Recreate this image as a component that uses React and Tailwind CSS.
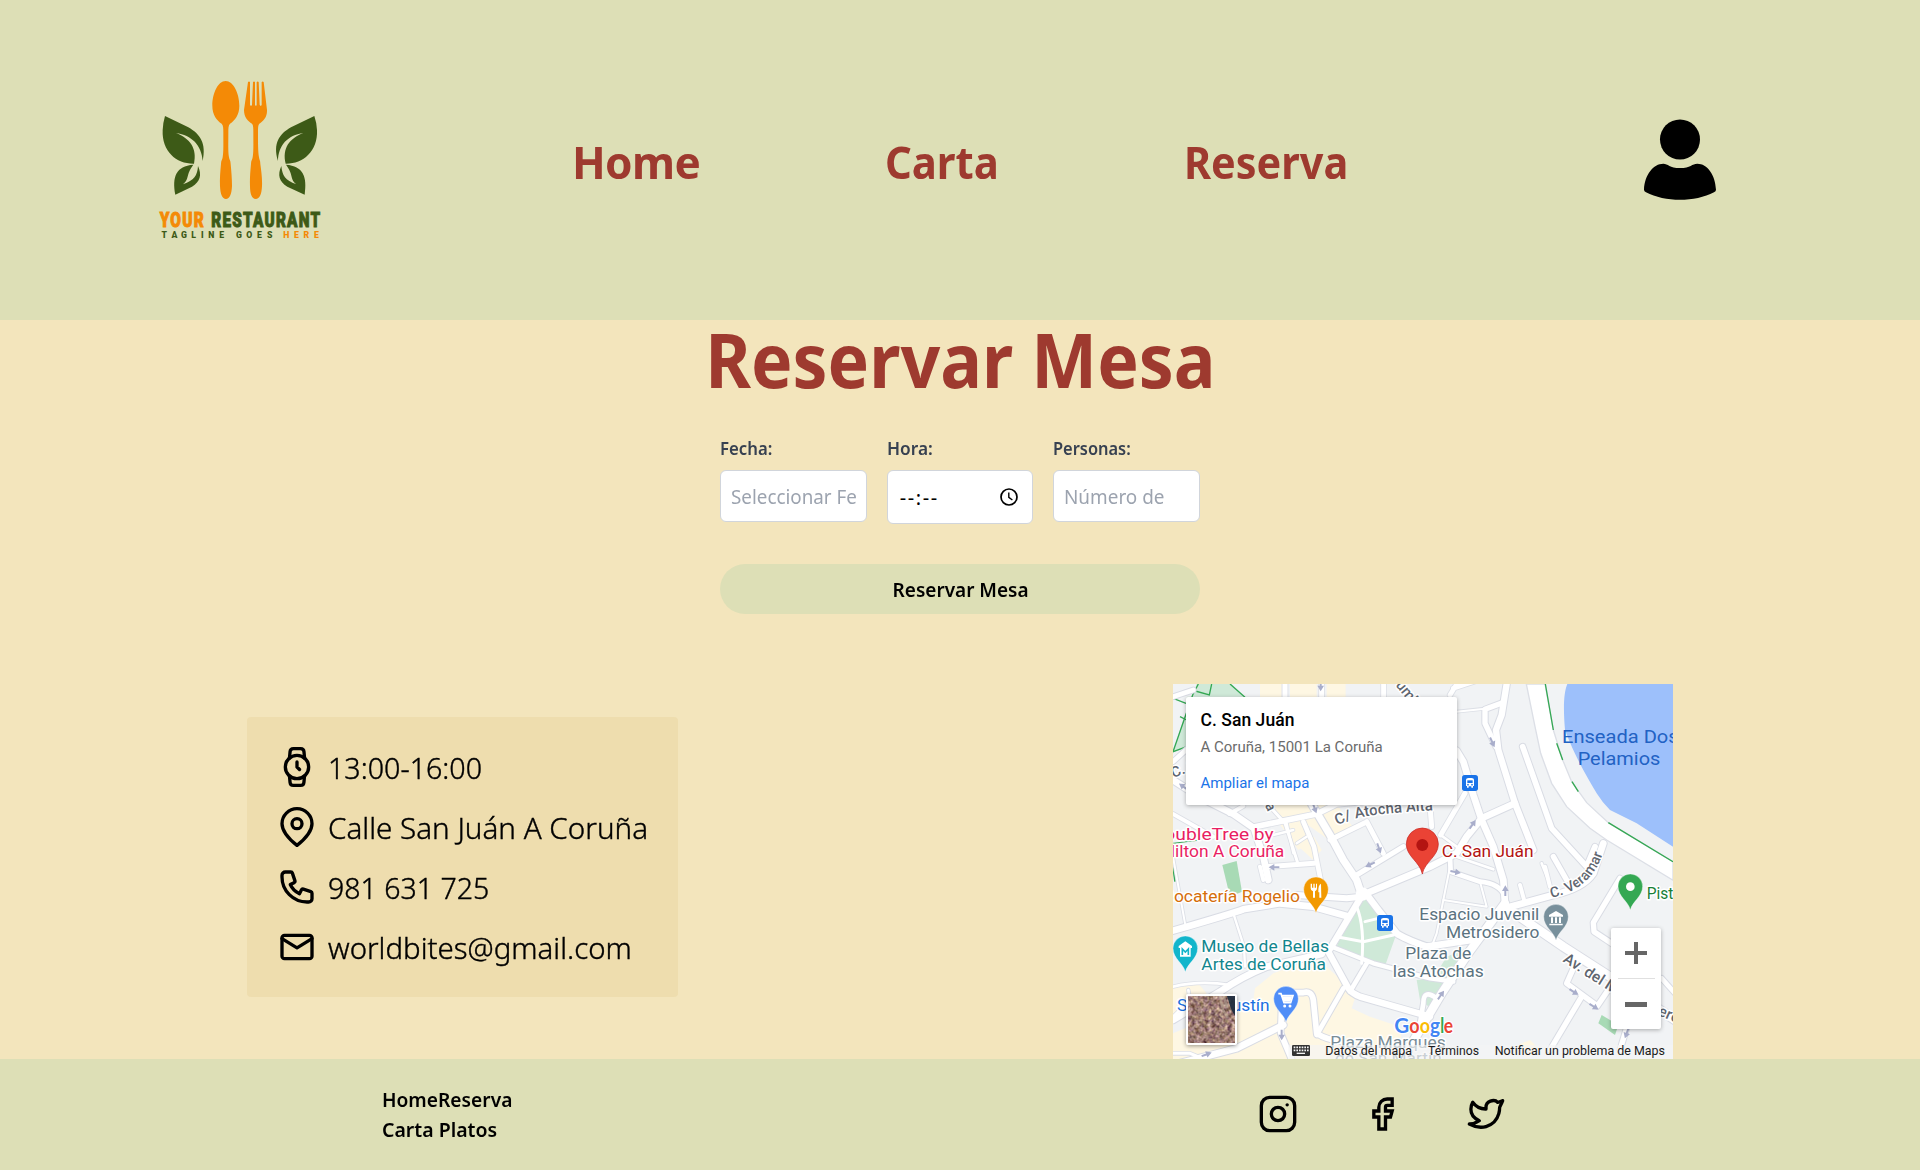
import React from "react";

function Logo() {
  return (
    <svg className="h-[200px] w-[200px] shrink-0" viewBox="0 0 600 600">
      <g fill="#f48a06">
        <path d="M257 63C234 63 217 100 217 137C217 164 230 181 245 191C250 196 250 205 250 216C250 250 251 275 248 292C247 300 243 302 243 312C241 335 239 355 240 378C241 402 247 417 258 417C269 417 275 402 276 378C276 355 274 335 272 312C272 302 268 300 267 292C264 275 265 250 265 216C265 205 265 196 270 191C285 181 298 164 298 137C298 100 280 63 257 63Z" />
        <path d="M324 66Q327 63 330 66V134Q333 141 336 134L339 66Q342 63 345 66V134Q348 141 350 134V66Q353 63 356 66L359 134Q362 141 365 134V66Q368 63 371 66L381 150C382 172 370 184 358 191C354 195 354 205 354 216C354 250 354 275 357 292C358 300 361 302 361 312C364 335 367 355 366 378C365 402 359 417 347 417C336 417 330 402 330 378C329 355 331 335 333 312C333 302 337 300 338 292C341 275 340 250 340 216C340 205 340 195 336 191C324 184 312 172 312 150Z" />
      </g>
      <g fill="#3d5a17">
        <path d="M75 168L145 202C180 222 200 250 188 303C185 255 155 226 108 219C150 235 172 265 162 311C110 312 65 275 68 210Q69 188 75 168ZM160 314C136 346 150 355 129 373C163 360 172 347 174 318C186 345 181 365 156 380L106 404C96 350 108 318 160 314Z" />
        <path d="M523 168L453 202C418 222 398 250 414 303C415 255 443 226 490 219C448 235 426 265 437 311C488 312 534 275 531 210Q530 188 523 168ZM438 314C462 346 448 355 469 373C435 360 427 347 424 318C412 345 417 365 442 380L494 404C502 350 490 318 438 314Z" />
      </g>
      <g fontFamily="Roboto, Inter, sans-serif" fontWeight="900">
        <text x="59" y="500" fontSize="61" letterSpacing="5" textLength="136" lengthAdjust="spacingAndGlyphs" fill="#f48a06" stroke="#f48a06" strokeWidth="3">YOUR</text>
        <text x="214" y="500" fontSize="61" letterSpacing="5" textLength="330" lengthAdjust="spacingAndGlyphs" fill="#3d5a17" stroke="#3d5a17" strokeWidth="3">RESTAURANT</text>
        <g fontSize="26" textAnchor="middle">
          <text y="535" x="73 103 132 161 187 214 245" fill="#3d5a17">TAGLINE</text>
          <text y="535" x="297 328 358 389" fill="#3d5a17">GOES</text>
          <text y="535" x="439 469 499 529" fill="#f48a06">HERE</text>
        </g>
      </g>
    </svg>
  );
}

const tile = "h-10 w-10 shrink-0";
function Line({ children }) {
  return (
    <svg className={tile} viewBox="0 0 24 24" fill="none" stroke="black" strokeWidth="2" strokeLinecap="round" strokeLinejoin="round">
      {children}
    </svg>
  );
}

/* Roads are [path, width]; the drawing's unit is a third of a pixel. */
const minor = [
  ["M345 12V55M455 12V55M641 12V55", 15],
  ["M295 375L345 430L382 545", 9],
  ["M350 430L370 520M380 490L410 470M310 465L370 450", 7],
  ["M400 425L432 500L452 600", 14],
  ["M290 560L432 550M480 480L585 428M590 425L640 520M780 380L785 440M885 340L812 465", 15],
  ["M220 378L178 402M9 402L130 470", 12],
  ["M255 440L440 402L500 372L620 360", 17],
  ["M860 95L945 86", 6],
  ["M812 465L860 500M860 530L970 568", 8],
  ["M840 560L828 620L800 760L785 800", 6],
  ["M860 12L840 45M850 25L940 -5", 14],
  ["M820 660L950 680L930 605M9 530L45 730", 6],
  ["M190 700L222 800L225 860", 7],
  ["M270 560L280 600M1050 615L1065 670M1125 560L1140 620", 12],
  ["M1115 550L1135 600", 8],
  ["M9 920Q90 900 180 915", 8],
  ["M9 1010L60 960L55 930", 8],
  ["M9 1120L60 1120L100 1137", 9],
];
const major = [
  ["M9 300L90 352L190 402L252 445L280 530L295 600", 20],
  ["M9 245L70 190M-5 55L70 30", 14],
  ["M9 752Q190 700 220 688L330 670L430 680L530 708", 20],
  ["M380 645L530 655L575 650", 18],
  ["M9 1020L150 935Q215 890 290 860L455 822", 20],
  ["M425 372L480 465L520 540L560 600L575 645", 22],
  ["M577 645L780 560L860 520L890 470L935 415L1035 370", 20],
  ["M560 585L700 500", 15],
  ["M577 645L475 815L535 925Q545 940 570 950L780 1010", 19],
  ["M485 800L610 850L780 895L850 905", 13],
  ["M595 650L625 690L680 760Q700 775 770 800L905 780", 20],
  ["M590 850L540 935M520 925L440 1065", 14],
  ["M9 1155L200 1105L340 1035", 20],
  ["M335 970L332 1060L370 1150", 17],
  ["M350 938H400Q425 930 430 960L440 1060Q470 1080 520 1085L600 1130", 17],
  ["M860 212L880 245L910 345L935 420L970 500L1000 600L1005 670", 20],
  ["M1010 12L995 105L978 150L985 210L1035 370L1090 510", 19],
  ["M998 68L945 88L945 130L978 200", 16],
  ["M1058 200L1145 445L1250 560L1275 500", 17],
  ["M1150 530L1190 600", 16],
  ["M840 530L842 575L930 605Q990 610 1005 650", 14],
  ["M1015 682L1150 645Q1240 625 1270 580L1300 490", 20],
  ["M1005 670L900 812L815 940L690 1150", 25],
  ["M800 955Q760 925 760 970L750 1030", 14],
  ["M1005 680L1180 800L1320 890L1530 1030", 26],
  ["M1210 865L1190 910L1282 978L1318 925M1232 955L1140 1110", 16],
  ["M1350 595L1270 728L1272 755L1340 800M1380 1010L1350 1110", 16],
  ["M1475 895L1520 945", 14],
];

const label = { paintOrder: "stroke", stroke: "#fff", strokeWidth: 9, strokeLinejoin: "round" };
function T({ x, y, w, s = 52, c = "#5b7380", children, ...rest }) {
  return (
    <text x={x} y={y} fontSize={s} fill={c} textLength={w} lengthAdjust="spacingAndGlyphs" {...label} {...rest}>
      {children}
    </text>
  );
}
function CurvedName({ id, d, size, children }) {
  return (
    <>
      <path id={id} d={d} fill="none" />
      <text fontSize={size} fill="#5f6670" {...label}><textPath href={"#" + id}>{children}</textPath></text>
    </>
  );
}
function Pin({ x, y, c, children }) {
  return (
    <g transform={`translate(${x} ${y})`}>
      <path d="M0 54C-6 28-37 14-37-17A37 37 0 0 1 37-17C37 14 6 28 0 54Z" fill={c} stroke="#fff" strokeOpacity=".6" strokeWidth="2" />
      {children}
    </g>
  );
}
function Bus({ x, y }) {
  return (
    <g transform={`translate(${x} ${y})`}>
      <rect width="48" height="48" rx="8" fill="#1a73e8" />
      <path d="M12 16Q12 9 20 9H28Q36 9 36 16V33H33V38H28V34H20V38H15V33H12Z" fill="#fff" />
      <path d="M16 16H32V24H16Z" fill="#1a73e8" />
      <circle cx="18" cy="29" r="2.5" fill="#1a73e8" />
      <circle cx="30" cy="29" r="2.5" fill="#1a73e8" />
    </g>
  );
}
function Arrow({ x, y, r }) {
  return (
    <path transform={`translate(${x} ${y}) rotate(${r})`} d="M-16-3H-1V-10L16 0L-1 10V3H-16Z" fill="#a9aecb" />
  );
}

function MapView() {
  return (
    <div className="relative h-[375px] w-[500px] overflow-hidden bg-[#f1f3f5]">
      <svg className="block h-full w-full" viewBox="9 12 1500 1125" fontFamily="Roboto, sans-serif">
        <g fill="#fef7e3">
          <path d="M270 12H335V55H270ZM360 12H440V55H360ZM470 12H527V55H470ZM315 375L500 372L548 440L470 475L400 425L430 480L385 510L320 420Z" />
          <path d="M370 485L432 470L455 510L430 540Z" />
          <path d="M255 925L310 880L440 835L560 940L545 985L600 1010L690 1040L700 1137H9V1060L250 960Z" />
          <path d="M9 920L80 905L110 940L9 1010Z" />
          <path d="M1050 1092L1080 1080L1110 1110L1070 1137Z" />
        </g>
        <path d="M80 12H185L222 50H50V205L9 215L40 120Z" fill="#cfe9d8" />
        <path d="M85 12L68 45L9 215L50 200M9 55L48 70M65 30L118 45L125 12M180 12L225 52M30 110L50 120" fill="none" stroke="#34a853" strokeWidth="4" />
        <path d="M9 490L90 480" stroke="#34a853" strokeWidth="3" />
        <path d="M9 560L15 605" stroke="#34a853" strokeWidth="5" />
        <path d="M157 555L200 543L216 635L180 650Z" fill="#a8dab5" />
        <path d="M540 690L590 655L620 700L680 760L645 858L500 800Z" fill="#cfe9d8" />
        <path d="M740 900L790 895L830 830L900 800L870 880L790 990L750 960Z" fill="#cfe9d8" />
        <path d="M1295 1005L1345 1035L1335 1065L1285 1030Z" fill="#a8dab5" />
        <path d="M1192 12C1180 40 1180 90 1185 150C1215 230 1245 280 1280 340Q1295 365 1320 390L1400 430L1509 500V12Z" fill="#9dc0fb" />
        <g fill="none" strokeLinecap="round" strokeLinejoin="round">
          {minor.map(([d, w]) => <path key={d} d={d} stroke="#dcdfe6" strokeWidth={w + 5} />)}
          {major.map(([d, w]) => <path key={d} d={d} stroke="#d9dce4" strokeWidth={w + 6} />)}
          {minor.map(([d, w]) => <path key={d} d={d} stroke="#fff" strokeWidth={w} />)}
          {major.map(([d, w]) => <path key={d} d={d} stroke="#fff" strokeWidth={w} />)}
          <path d="M560 680Q585 740 575 850M500 770L580 785L670 765M585 725L625 715" stroke="#fff" strokeWidth="9" />
        </g>
        <path d="M1069 12L1095 140L1112 220L1145 310L1190 380L1260 445L1310 480L1509 601V545L1315 428L1250 368L1205 305L1178 240L1150 150L1125 12Z" fill="#fff" stroke="#dcdfe6" strokeWidth="4" />
        <path d="M1126 12L1150 150M1160 190L1178 240M1206 305L1225 335M1315 428L1509 545" stroke="#34a853" strokeWidth="4" fill="none" />
        <circle cx="577" cy="642" r="20" fill="#fff" />

        <Arrow x={452} y={18} r={90} />
        <Arrow x={40} y={320} r={215} />
        <Arrow x={434} y={385} r={70} />
        <Arrow x={627} y={505} r={70} />
        <Arrow x={312} y={562} r={180} />
        <Arrow x={600} y={554} r={155} />
        <Arrow x={967} y={187} r={65} />
        <Arrow x={908} y={433} r={-55} />
        <Arrow x={857} y={576} r={10} />
        <Arrow x={1006} y={632} r={-90} />
        <Arrow x={813} y={945} r={-55} />
        <Arrow x={1212} y={936} r={32} />
        <Arrow x={1272} y={980} r={32} />
        <Arrow x={1370} y={1060} r={110} />
        <Arrow x={335} y={1065} r={90} />
        <Arrow x={110} y={1123} r={-20} />

        <T x={1176} y={190} w={350} s={57} c="#2262c4" strokeWidth={0}>Enseada Dos</T>
        <T x={1223} y={256} w={248} s={57} c="#2262c4" strokeWidth={0}>Pelamios</T>
        <g fontWeight="500">
          <CurvedName id="street-humboldt" d="M676 16L790 155" size={44}>umboldt</CurvedName>
          <CurvedName id="street-west" d="M10 294L90 262" size={44}>C. San</CurvedName>
          <CurvedName id="street-florencia" d="M250 305L310 430" size={42}>encia</CurvedName>
          <CurvedName id="street-atocha" d="M502 436C560 404 660 399 800 390" size={45}>C/ Atocha Alta</CurvedName>
          <CurvedName id="street-veramar" d="M1144 654C1225 635 1290 590 1308 480" size={43}>C. Veramar</CurvedName>
          <CurvedName id="street-metrosidero" d="M1177 844L1400 985" size={46}>Av. del Met</CurvedName>
          <CurvedName id="street-east" d="M1462 1004L1540 1038" size={46}>ero</CurvedName>
        </g>
        <T x={-17} y={480} w={328} c="#e91e63">oubleTree by</T>
        <T x={-22} y={532} w={365} c="#e91e63">Hilton A Coruña</T>
        <T x={-21} y={665} w={411} c="#d56e0c">Bocatería Rogelio</T>
        <T x={94} y={817} w={383} c="#12868e">Museo de Bellas</T>
        <T x={94} y={869} w={374} c="#12868e">Artes de Coruña</T>
        <T x={815} y={531} w={276} c="#b31412">C. San Juán</T>
        <T x={748} y={721} w={360}>Espacio Juvenil</T>
        <T x={828} y={773} w={280}>Metrosidero</T>
        <T x={706} y={837} w={198}>Plaza de</T>
        <T x={668} y={890} w={273}>las Atochas</T>
        <T x={1430} y={656} w={105} c="#188038">Pista</T>
        <T x={21} y={993} w={278} c="#1a6fe0">San Agustín</T>
        <T x={481} y={1103} w={346} c="#7a8d97">Plaza Marqués</T>
        <T x={495} y={1152} w={320} c="#7a8d97">de San Martín</T>

        <Pin x={438} y={645} c="#f29900">
          <path d="M-16-34V-20Q-16-12-9-11V8H-3V-11Q3-12 3-20V-34H0V-22H-4V-34H-8V-22H-12V-34ZM15-34Q6-30 7-8H10V8H16Z" fill="#fff" />
        </Pin>
        <Pin x={46} y={822} c="#12b5cb">
          <path d="M0-38L-20-24V-18H-16V8H16V-18H20V-24Z" fill="#fff" />
          <path d="M-9 3V-15L0-6L9-15V3" fill="none" stroke="#12b5cb" strokeWidth="5" />
        </Pin>
        <Pin x={348} y={973} c="#4f8df7">
          <path d="M-23-32H-15L-6-5H14L21-26H-12" fill="none" stroke="#fff" strokeWidth="5" />
          <path d="M-13-24H19L13-8H-7Z" fill="#fff" />
          <circle cx="-4" cy="5" r="4.5" fill="#fff" /><circle cx="12" cy="5" r="4.5" fill="#fff" />
        </Pin>
        <Pin x={1158} y={727} c="#78909c">
          <path d="M0-34L-21-22V-17H21V-22ZM-15-15H-9V2H-15ZM-3-15H3V2H-3ZM9-15H15V2H9ZM-20 4H20V9H-20Z" fill="#fff" />
        </Pin>
        <Pin x={1381} y={636} c="#34a853">
          <circle cy="-16" r="13" fill="#fff" />
        </Pin>
        <Bus x={621} y={705} />
        <Bus x={876} y={285} />
        <path d="M757 582C750 545 709 530 709 492A48 48 0 0 1 805 492C805 530 764 545 757 582Z" fill="#ea4335" stroke="#c5221f" strokeWidth="2" />
        <circle cx="757" cy="495" r="18" fill="#b31412" />
        <g fontSize="60" fontWeight="700" stroke="#fff" strokeWidth="7" strokeLinejoin="round" style={{ paintOrder: "stroke" }} fontFamily="Lato, sans-serif">
          <text x="673" y="1059" fill="#4285f4" textLength="45" lengthAdjust="spacingAndGlyphs">G</text>
          <text x="718" y="1059" fill="#ea4335" textLength="31" lengthAdjust="spacingAndGlyphs">o</text>
          <text x="749" y="1059" fill="#fbbc04" textLength="31" lengthAdjust="spacingAndGlyphs">o</text>
          <text x="780" y="1059" fill="#4285f4" textLength="30" lengthAdjust="spacingAndGlyphs">g</text>
          <text x="811" y="1059" fill="#34a853" textLength="12" lengthAdjust="spacingAndGlyphs">l</text>
          <text x="821" y="1059" fill="#ea4335" textLength="28" lengthAdjust="spacingAndGlyphs">e</text>
        </g>
        <path d="M355 1095H1509V1137H355Z" fill="#f5f5f5" fillOpacity=".65" />
        <path d="M370 1095H416Q420 1095 420 1099V1124Q420 1128 416 1128H370Q366 1128 366 1124V1099Q366 1095 370 1095Z" fill="#333" />
        <path d="M371 1102H416M371 1111H416" stroke="#f5f5f5" strokeWidth="5" strokeDasharray="5 3" />
        <path d="M380 1120H405" stroke="#f5f5f5" strokeWidth="4" />
        <g fontSize="37" fill="#1b1b1b">
          <text x="466" y="1125" textLength="260" lengthAdjust="spacingAndGlyphs">Datos del mapa</text>
          <text x="774" y="1125" textLength="153" lengthAdjust="spacingAndGlyphs">Términos</text>
          <text x="974" y="1125" textLength="511" lengthAdjust="spacingAndGlyphs">Notificar un problema de Maps</text>
        </g>
      </svg>

      <div className="absolute left-[13px] top-[13px] h-[108px] w-[271px] rounded-xs bg-white px-[14.5px] pt-[13px] font-['Roboto',sans-serif] shadow-[0_1px_4px_rgba(0,0,0,0.3)]">
        <p className="text-[17.5px] font-medium leading-5 tracking-[0.05px] text-black">C. San Juán</p>
        <p className="mt-2 text-[15px] leading-[18px] text-[#6b6b6b]">A Coruña, 15001 La Coruña</p>
        <p className="mt-[18px] text-[15px] leading-[18px] text-[#1a73e8]">Ampliar el mapa</p>
      </div>

      <div className="absolute left-[13px] top-[310px] h-[51px] w-[51px] rounded-xs border-2 border-white shadow-[0_1px_4px_rgba(0,0,0,0.4)]">
        <svg className="block h-full w-full" viewBox="0 0 47 47">
          <filter id="terrain" x="0" y="0" width="1" height="1" colorInterpolationFilters="sRGB">
            <feTurbulence type="fractalNoise" baseFrequency="0.25" numOctaves="4" seed="7" />
            <feColorMatrix values="0.8 0.3 0 0 0.06  0.75 0.4 0 0 -0.09  0.7 0.2 0.2 0 -0.1  0 0 0 0 1" />
          </filter>
          <rect width="47" height="47" filter="url(#terrain)" />
          <path d="M39 0H47V20L43 13Z" fill="#18283b" fillOpacity=".9" />
          <path d="M32 0L35 14L40 22M36 0L39 12" fill="none" stroke="#b9a695" strokeWidth="2.5" strokeOpacity=".6" />
        </svg>
      </div>

      <div className="absolute left-[438px] top-[244px] flex h-[101px] w-[50px] flex-col items-center rounded-xs bg-white shadow-[0_1px_4px_rgba(0,0,0,0.3)]">
        <div className="flex h-[50px] items-center"><svg className="h-[22px] w-[22px]" viewBox="0 0 22 22"><path d="M9 0H13V9H22V13H13V22H9V13H0V9H9Z" fill="#666" /></svg></div>
        <div className="h-px w-[37px] bg-[#e0e0e0]" />
        <div className="flex h-[50px] items-center"><div className="h-[5px] w-[22px] bg-[#666]" /></div>
      </div>
    </div>
  );
}

const field = "flex items-center rounded-md border border-[#d1d5db] bg-white pt-[2px] text-xl text-[#9ca3af]";
const labelCls = "mb-2 block text-lg font-semibold leading-[27px] text-[#374151]";
const squeeze = "inline-block origin-left whitespace-pre";
const row = "flex h-10 gap-[11px]";

export default function App() {
  return (
    <div className="flex h-[1170px] w-[1920px] flex-col overflow-hidden bg-[#f3e5bc] font-['Noto_Sans','Open_Sans',sans-serif] text-black">
      <header className="flex h-80 shrink-0 items-center bg-[#dddfb6] pl-[140px]">
        <Logo />
        <nav className="ml-[230px] flex w-[1074px] pt-[3px] text-[45px] font-bold leading-none text-[#9e3a2f]">
          <a className="w-[314px]"><span className={squeeze + " scale-x-[0.98] pl-[2px] tracking-[-0.6px]"}>Home</span></a>
          <a className="w-[299px]"><span className={squeeze + " scale-x-[0.93] pl-px"}>Carta</span></a>
          <a><span className={squeeze + " scale-x-[0.92] pl-px"}>Reserva</span></a>
        </nav>
        <svg className="h-[82px] w-[72px]" viewBox="72 58 216 246">
          <circle cx="180" cy="119.5" r="60" />
          <path d="M72 270C74 225 100 192 130 192C144 192 148 205 180 205C212 205 216 192 232 192C262 192 286 225 288 270Q288 275 282 278C225 308 135 308 78 278Q72 275 72 270Z" />
        </svg>
      </header>

      <main className="flex flex-1 flex-col items-center">
        <h1 className="text-[75px] font-bold leading-[79px] text-[#9e3a2f]"><span className="inline-block scale-x-[0.93]">Reservar Mesa</span></h1>
        <form className="mt-9 w-[480px]">
          <div className="grid grid-cols-3 items-start gap-5">
            <div>
              <label className={labelCls}><span className={squeeze + " scale-x-[0.93]"}>Fecha:</span></label>
              <div className={field + " h-[52px] pl-[10px]"}><span className={squeeze + " scale-x-[0.94]"}>Seleccionar Fe</span></div>
            </div>
            <div>
              <label className={labelCls}><span className={squeeze + " scale-x-[0.96]"}>Hora:</span></label>
              <div className={field + " h-[54px] justify-between pl-3 pr-[14px]"}>
                <span className="tracking-[1.6px] text-black">--:--</span>
                <svg className="mb-[2px] h-[18px] w-[18px]" viewBox="0 0 18 18" fill="none" stroke="black" strokeWidth="1.7">
                  <circle cx="9" cy="9" r="8" />
                  <path d="M8.800 4.500V9.400L12.400 12" strokeWidth="1.4" />
                </svg>
              </div>
            </div>
            <div>
              <label className={labelCls}><span className={squeeze + " scale-x-[0.912]"}>Personas:</span></label>
              <div className={field + " h-[52px] pl-[10px]"}><span className={squeeze + " scale-x-[0.945]"}>Número de</span></div>
            </div>
          </div>
          <button type="button" className="mt-10 block h-[50px] w-full rounded-full bg-[#dddfb6] pl-px pt-[2px] text-xl font-semibold">
            <span className="inline-block scale-x-[0.95]">Reservar Mesa</span>
          </button>
        </form>

        <div className="mt-auto flex w-full items-end pl-[247px]">
          <section className="mb-[62px] mr-[495px] flex h-[280px] w-[431px] flex-col gap-5 rounded bg-[#eeddae] p-[30px] text-3xl font-light leading-[42px] [-webkit-text-stroke:0.4px_black]">
            <div className={row}>
              <Line>
                <circle cx="12" cy="12" r="7" />
                <path d="M12 9v3l1.500 1.500M16.510 17.350l-.35 3.830a2 2 0 0 1-2 1.820H9.830a2 2 0 0 1-2-1.820l-.35-3.830m.01-10.700l.35-3.830A2 2 0 0 1 9.830 1h4.350a2 2 0 0 1 2 1.820l.35 3.830" />
              </Line>
              <span className={squeeze + " scale-x-[0.955]"}>13:00-16:00</span>
            </div>
            <div className={row}>
              <Line>
                <path d="M21 10c0 5.500-5.500 10.200-9 13c-3.500-2.800-9-7.500-9-13a9 9 0 0 1 18 0z" />
                <circle cx="12" cy="10" r="3" />
              </Line>
              <span className={squeeze + " scale-x-[0.986]"}>Calle San Juán A Coruña</span>
            </div>
            <div className={row}>
              <Line>
                <path d="M3 5a2 2 0 012-2h3.280a1 1 0 01.948.684l1.498 4.493a1 1 0 01-.502 1.210l-2.257 1.130a11.042 11.042 0 005.516 5.516l1.130-2.257a1 1 0 011.210-.502l4.493 1.498a1 1 0 01.684.949V19a2 2 0 01-2 2h-1C9.716 21 3 14.284 3 6V5z" />
              </Line>
              <span className={squeeze + " scale-x-[0.95]"}>981 631 725</span>
            </div>
            <div className={row}>
              <Line>
                <rect x="3" y="5" width="18" height="14" rx="1.5" />
                <path d="M3 7l9 5.500L21 7" />
              </Line>
              <span className={squeeze + " scale-x-[0.98]"}>worldbites@gmail.com</span>
            </div>
          </section>
          <MapView />
        </div>
      </main>

      <footer className="flex h-[111px] shrink-0 bg-[#dddfb6] pl-[382px] pt-[26px] text-xl font-semibold leading-[30px]">
        <div className="w-[876px]">
          <div><span className={squeeze + " scale-x-[0.96]"}>HomeReserva</span></div>
          <div><span className={squeeze + " scale-x-[0.975]"}>Carta Platos</span></div>
        </div>
        <div className="flex pt-[9px]">
          <Line>
            <rect x="2" y="2" width="20" height="20" rx="5" />
            <circle cx="12" cy="12" r="4" />
            <path d="M17.500 6.500h.01" />
          </Line>
          <div className="ml-[65px] mr-[63px]">
            <Line>
              <path strokeLinecap="butt" strokeLinejoin="miter" d="M17.500 3h-3a5 5 0 0 0-5 5v2.200h-3v3.600h3V21h4v-7.200h3l1-3.600h-4V7.800a1 1 0 0 1 1-1h3z" />
            </Line>
          </div>
          <Line>
            <path d="M22 4.010c-1 .49 -1.980 .689 -3 .99c-1.121 -1.265 -2.783 -1.335 -4.380 -.737s-2.643 2.060 -2.620 3.737v1c-3.245 .083 -6.135 -1.395 -8 -4c0 0 -4.182 7.433 4 11c-1.872 1.247 -3.739 2.088 -6 2c3.308 1.803 6.913 2.423 10.034 1.517c3.580 -1.040 6.522 -3.723 7.651 -7.742a13.840 13.840 0 0 0 .497 -3.753c0 -.249 1.510 -2.772 1.818 -4.013z" />
          </Line>
        </div>
      </footer>
    </div>
  );
}
